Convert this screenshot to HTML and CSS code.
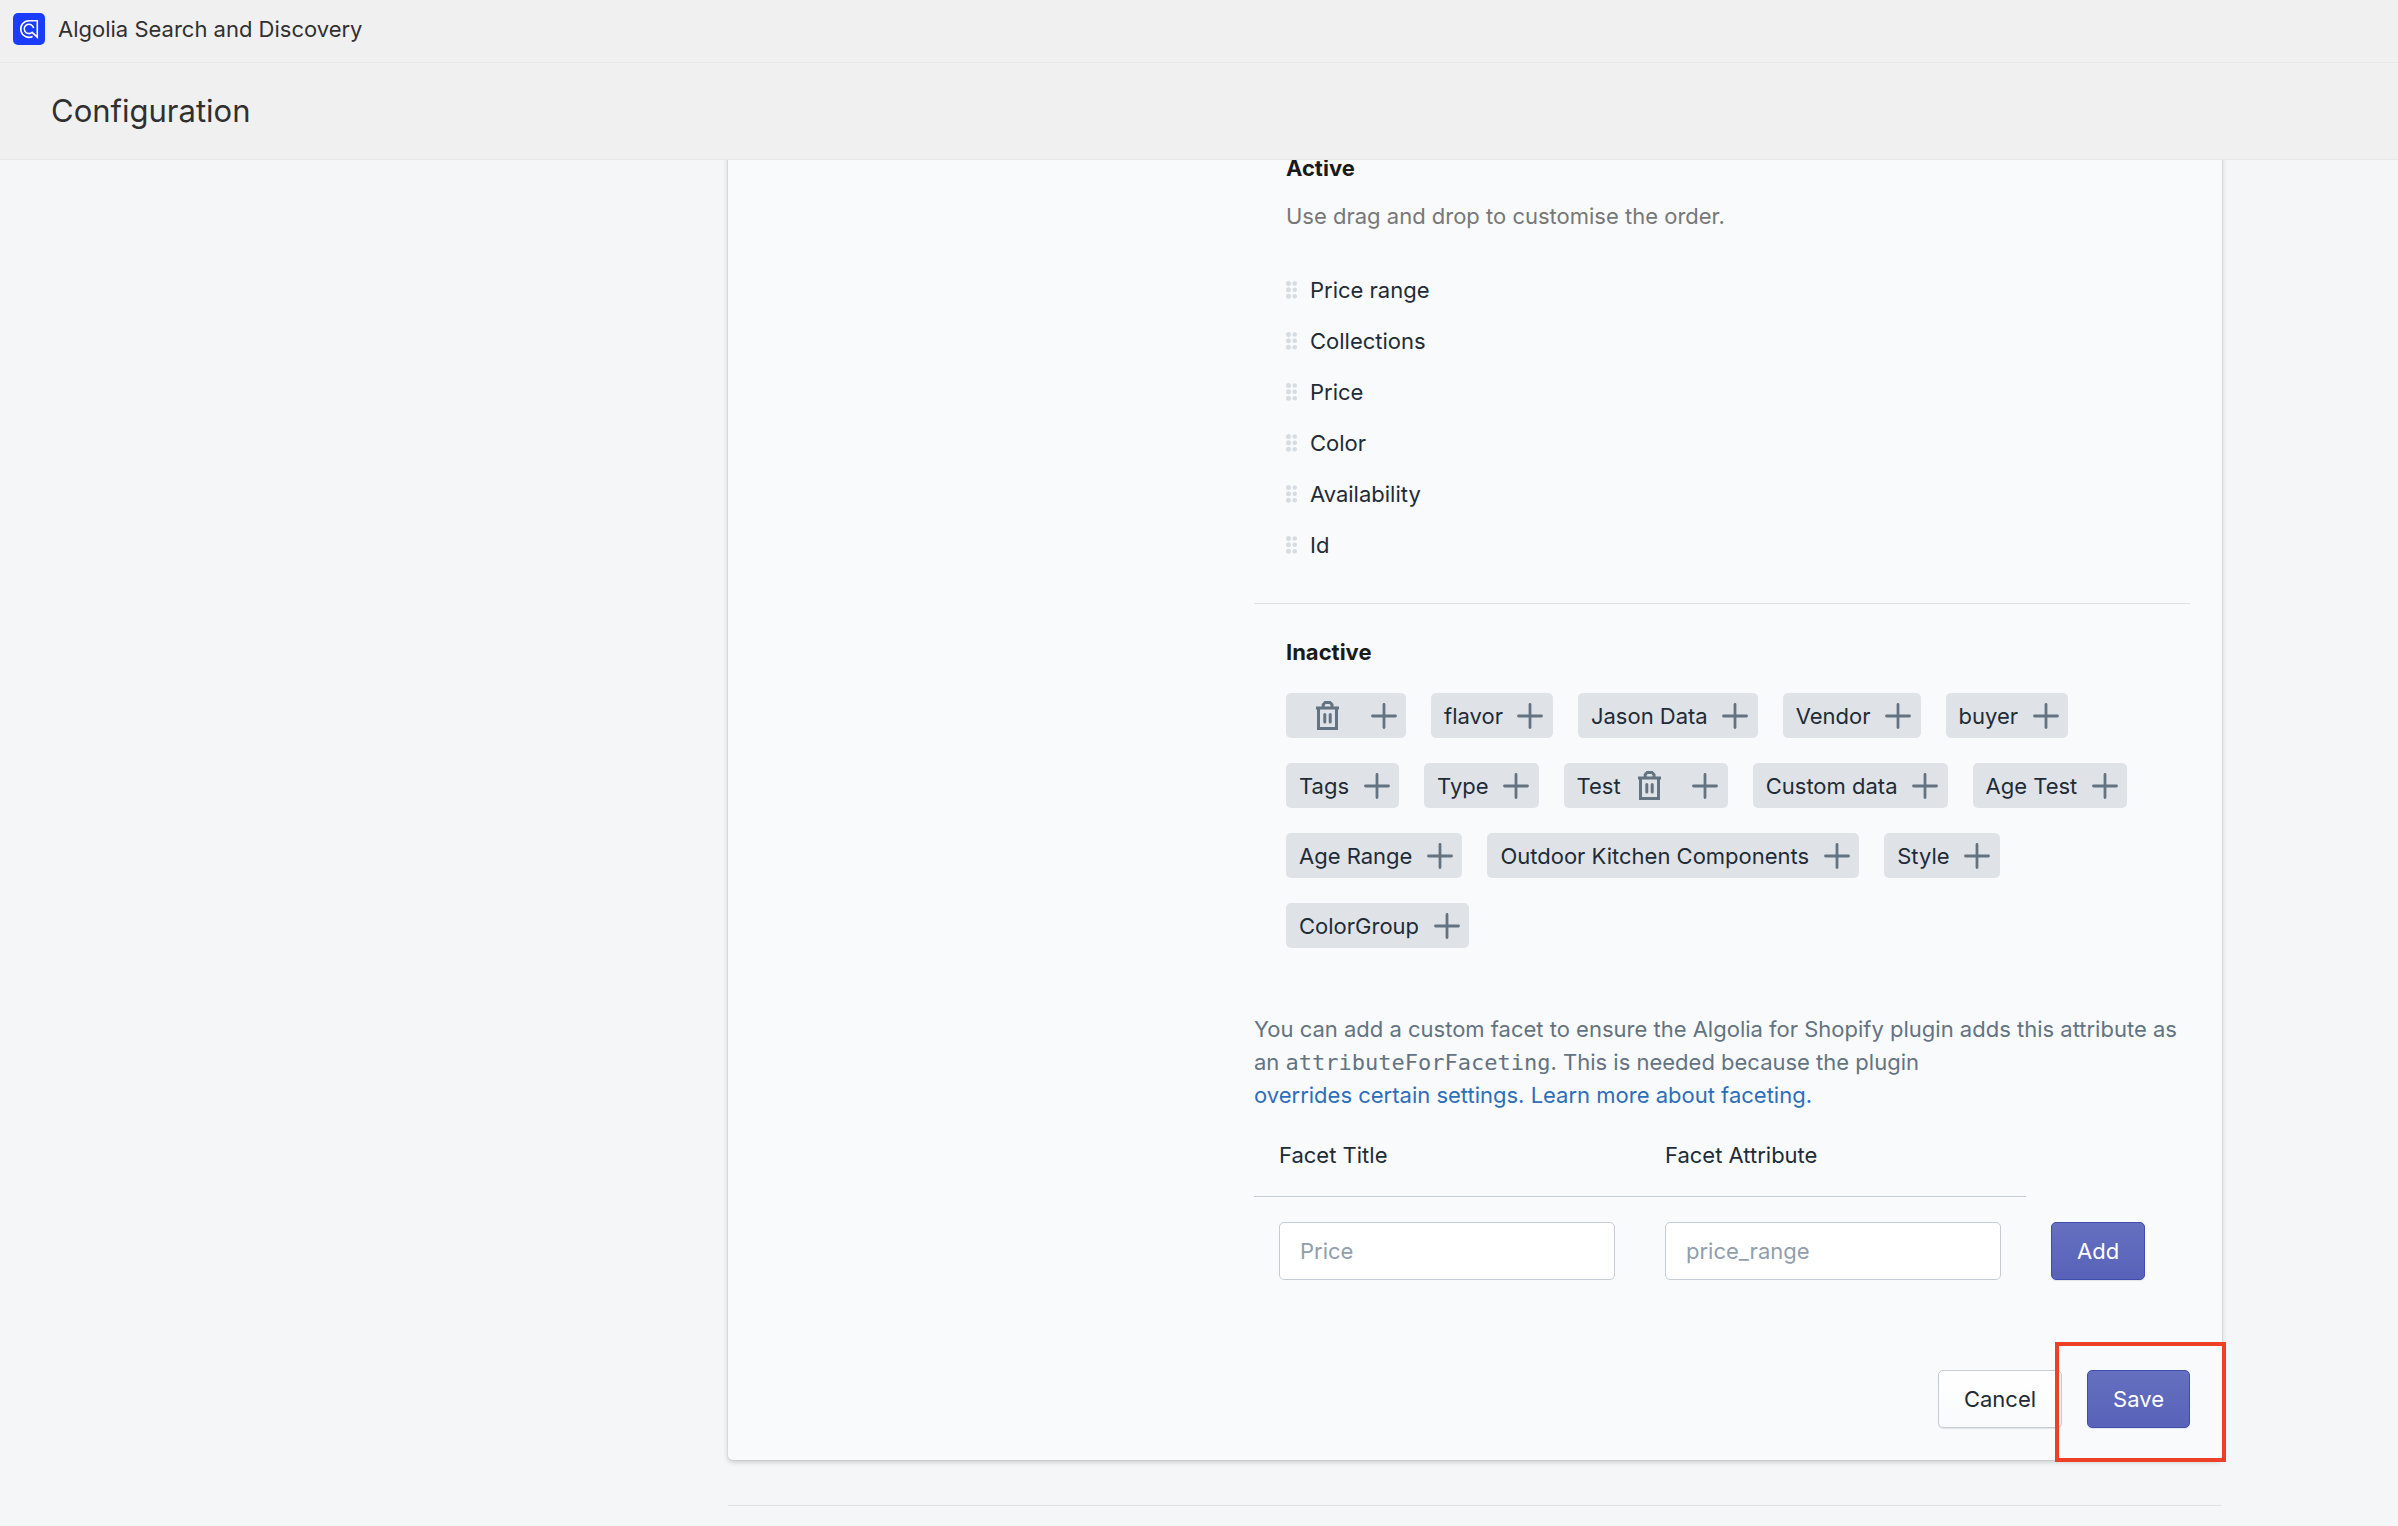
FILE: index.html
```
<!DOCTYPE html>
<html lang="en">
  <head>
    <meta charset="utf-8">
    <title>Algolia Search and Discovery</title>
    <link rel="stylesheet" href="styles.css">
  </head>

  <body>
    <header class="header">
      <div class="app-bar">
        <svg class="logo" viewBox="0 0 32 32" aria-hidden="true">
          <rect width="32" height="32" rx="5" fill="#1a3cff" />
          <path d="M20.6 15.2a4.7 4.7 0 1 0-1.5 4.2l5.2 4.8V7.7H16a8.3 8.3 0 1 0 3.6 15.8" fill="none" stroke="#fff" stroke-width="1.6" />
        </svg>
        <span>Algolia Search and Discovery</span>
      </div>
      <div class="title-bar">
        <h1>Configuration</h1>
      </div>
    </header>

    <!-- shared icons -->
    <svg class="sprite" aria-hidden="true">
      <symbol id="drag" viewBox="0 0 11 18">
        <circle cx="2.5" cy="2.5" r="2.5" />
        <circle cx="8.7" cy="2.5" r="2.3" />
        <circle cx="2.5" cy="8.8" r="2.5" />
        <circle cx="8.7" cy="8.8" r="2.3" />
        <circle cx="2.5" cy="15.2" r="2.5" />
        <circle cx="8.7" cy="15.2" r="2.3" />
      </symbol>
      <symbol id="plus" viewBox="0 0 26 26">
        <path d="M13 1.5v23M1.5 13h23" fill="none" stroke="currentColor" stroke-width="2.8" stroke-linecap="round" />
      </symbol>
      <symbol id="trash" viewBox="0 0 23 29">
        <path d="M7.2 6V3.5l2-2H14l2 2V6M0 7h23M2.5 7.5v20h18v-20" fill="none" stroke="currentColor" stroke-width="3" />
        <path d="M8.8 13.5V21M14.2 13.5V21" fill="none" stroke="currentColor" stroke-width="3" stroke-linecap="round" />
      </symbol>
    </svg>

    <main class="page">
      <section class="card">
        <div class="settings">
          <div class="group">
            <h2>Active</h2>
            <p class="hint">Use drag and drop to customise the order.</p>
            <ul class="facets">
              <li><svg class="drag"><use href="#drag" /></svg>Price range</li>
              <li><svg class="drag"><use href="#drag" /></svg>Collections</li>
              <li><svg class="drag"><use href="#drag" /></svg>Price</li>
              <li><svg class="drag"><use href="#drag" /></svg>Color</li>
              <li><svg class="drag"><use href="#drag" /></svg>Availability</li>
              <li><svg class="drag"><use href="#drag" /></svg>Id</li>
            </ul>
          </div>

          <div class="group inactive">
            <h2>Inactive</h2>
            <ul class="chips">
              <li class="chip"><button class="remove" aria-label="Delete"><svg><use href="#trash" /></svg></button><button class="plus" aria-label="Add"><svg><use href="#plus" /></svg></button></li>
              <li class="chip">flavor<button class="plus" aria-label="Add flavor"><svg><use href="#plus" /></svg></button></li>
              <li class="chip">Jason Data<button class="plus" aria-label="Add Jason Data"><svg><use href="#plus" /></svg></button></li>
              <li class="chip">Vendor<button class="plus" aria-label="Add Vendor"><svg><use href="#plus" /></svg></button></li>
              <li class="chip">buyer<button class="plus" aria-label="Add buyer"><svg><use href="#plus" /></svg></button></li>
              <li class="chip">Tags<button class="plus" aria-label="Add Tags"><svg><use href="#plus" /></svg></button></li>
              <li class="chip">Type<button class="plus" aria-label="Add Type"><svg><use href="#plus" /></svg></button></li>
              <li class="chip">Test<button class="remove" aria-label="Delete Test"><svg><use href="#trash" /></svg></button><button class="plus" aria-label="Add Test"><svg><use href="#plus" /></svg></button></li>
              <li class="chip">Custom data<button class="plus" aria-label="Add Custom data"><svg><use href="#plus" /></svg></button></li>
              <li class="chip">Age Test<button class="plus" aria-label="Add Age Test"><svg><use href="#plus" /></svg></button></li>
              <li class="chip">Age Range<button class="plus" aria-label="Add Age Range"><svg><use href="#plus" /></svg></button></li>
              <li class="chip">Outdoor Kitchen Components<button class="plus" aria-label="Add Outdoor Kitchen Components"><svg><use href="#plus" /></svg></button></li>
              <li class="chip">Style<button class="plus" aria-label="Add Style"><svg><use href="#plus" /></svg></button></li>
              <li class="chip">ColorGroup<button class="plus" aria-label="Add ColorGroup"><svg><use href="#plus" /></svg></button></li>
            </ul>
          </div>

          <p class="note">
            You can add a custom facet to ensure the Algolia for Shopify plugin adds this attribute as
            an <code>attributeForFaceting</code>. This is needed because the plugin
            <a href="#">overrides certain settings. Learn more about faceting.</a>
          </p>

          <table class="facet-form">
            <thead>
              <tr>
                <th><label for="facetTitle">Facet Title</label></th>
                <th><label for="facetAttribute">Facet Attribute</label></th>
              </tr>
            </thead>
            <tbody>
              <tr>
                <td><input type="text" id="facetTitle" placeholder="Price"></td>
                <td><input type="text" id="facetAttribute" placeholder="price_range"></td>
                <td><button class="btn primary">Add</button></td>
              </tr>
            </tbody>
          </table>
        </div>

        <div class="actions">
          <button class="btn">Cancel</button>
          <div class="highlight">
            <button class="btn primary">Save</button>
          </div>
        </div>
      </section>

      <hr class="divider">
    </main>
  </body>
</html>
```

FILE: styles.css
```
* {
  box-sizing: border-box;
}

body {
  margin: 0;
  background-color: #f4f6f8;
  color: #212b36;
  font-family: Inter, "Liberation Sans", sans-serif;
  font-size: 22px;
  line-height: 32px;
}

h1,
h2,
p,
ul {
  margin: 0;
  padding: 0;
}

ul {
  list-style: none;
}

button,
input {
  font: inherit;
}

button {
  cursor: pointer;
}

.header {
  position: sticky;
  top: 0;
  z-index: 1;
  background-color: #f0f0f0;
  color: #303030;
}

.app-bar {
  display: flex;
  align-items: center;
  gap: 13px;
  padding: 13px 13px 17px;
  border-bottom: 1px solid #e8e8e8;
}

.logo {
  width: 32px;
  height: 32px;
}

.title-bar {
  padding: 28px 51px;
  border-bottom: 1px solid #e8e8e8;
}

h1 {
  font-size: 31px;
  font-weight: 400;
  line-height: 40px;
}

h2 {
  color: #1a1a1a;
  font-size: 22px;
  font-weight: 700;
}

.sprite {
  display: none;
}

/* the page is scrolled a little under the sticky header */
.page {
  margin-top: -24px;
  padding: 0 176px 20px 728px;
}

.card {
  display: grid;
  grid-template-columns: 1fr 2fr;
  column-gap: 26px;
  padding: 16px 32px 32px;
  background-color: #f9fafc;
  border-radius: 5px;
  box-shadow: 0 0 0 1px rgba(63, 63, 68, 0.05), 0 2px 5px rgba(63, 63, 68, 0.25);
}

.settings,
.actions {
  grid-column: 2;
}

.group {
  padding: 0 32px 33px;
}

.hint {
  margin: 16px 0 32px;
  color: #777;
}

.facets li {
  display: flex;
  align-items: center;
  gap: 13px;
  height: 51px;
}

.drag {
  width: 11px;
  height: 18px;
  fill: #d5dce2;
}

.inactive {
  padding: 32px 32px 65px;
  border-top: 1px solid #dfe3e8;
}

.chips {
  display: flex;
  flex-wrap: wrap;
  gap: 25px;
  margin-top: 25px;
}

.chip {
  display: flex;
  align-items: center;
  height: 45px;
  padding-left: 13px;
  overflow: hidden;
  background-color: #dfe3e8;
  border-radius: 5px;
}

.chip button {
  display: flex;
  align-items: center;
  justify-content: center;
  height: 45px;
  padding: 0;
  background: none;
  border: none;
  color: #637381;
}

.chip .plus {
  width: 45px;
  margin-left: 5px;
}

.plus svg {
  width: 26px;
  height: 26px;
}

.chip .remove {
  width: 57px;
}

.remove svg {
  width: 23px;
  height: 29px;
}

.note {
  margin-bottom: 2px;
  color: #637381;
  line-height: 33px;
}

.note code {
  font-family: "DejaVu Sans Mono", monospace;
  font-size: 22px;
}

.note a {
  display: block;
  color: #2c6ebb;
  text-decoration: none;
}

.facet-form {
  border-collapse: collapse;
}

.facet-form th {
  padding: 25px;
  border-bottom: 1px solid #c4cdd5;
  font-weight: 400;
  text-align: left;
}

.facet-form td {
  padding: 25px;
}

.facet-form input {
  display: block;
  width: 336px;
  height: 58px;
  padding: 0 20px;
  background-color: #fff;
  border: 1px solid #c4cdd5;
  border-radius: 5px;
  color: #212b36;
}

.facet-form input::placeholder {
  color: #919eab;
}

.btn {
  display: block;
  height: 58px;
  padding: 0 25px;
  background: linear-gradient(#fff, #f9fafb);
  border: 1px solid #c4cdd5;
  border-radius: 5px;
  box-shadow: 0 1px 1px rgba(22, 29, 37, 0.1);
  color: #212b36;
}

.primary {
  background: linear-gradient(#6670c0, #5862b9);
  border-color: #3f4eae;
  color: #fff;
}

.actions {
  display: flex;
  justify-content: flex-end;
  gap: 25px;
  margin-top: 65px;
}

.highlight {
  position: relative;
}

/* red frame drawn over the card edge */
.highlight::after {
  content: "";
  position: absolute;
  inset: -28px -36px -34px -32px;
  border: 4px solid #ee4027;
  pointer-events: none;
}

.divider {
  height: 1px;
  margin: 45px 0 0;
  background-color: #dfe3e8;
  border: none;
}
```
